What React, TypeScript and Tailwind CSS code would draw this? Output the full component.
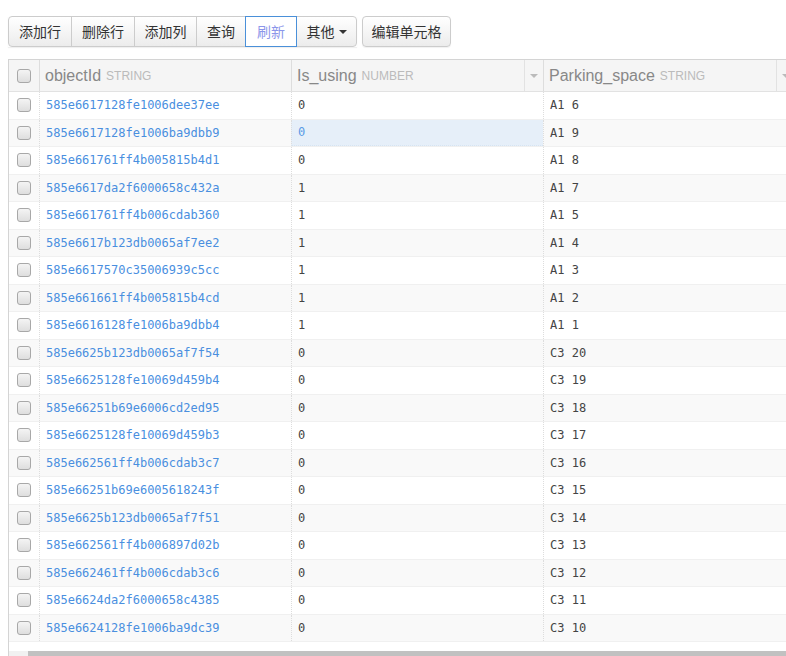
import React from 'react';

const rows: [string, string, string][] = [
  ['585e6617128fe1006dee37ee', '0', 'A1 6'],
  ['585e6617128fe1006ba9dbb9', '0', 'A1 9'],
  ['585e661761ff4b005815b4d1', '0', 'A1 8'],
  ['585e6617da2f6000658c432a', '1', 'A1 7'],
  ['585e661761ff4b006cdab360', '1', 'A1 5'],
  ['585e6617b123db0065af7ee2', '1', 'A1 4'],
  ['585e6617570c35006939c5cc', '1', 'A1 3'],
  ['585e661661ff4b005815b4cd', '1', 'A1 2'],
  ['585e6616128fe1006ba9dbb4', '1', 'A1 1'],
  ['585e6625b123db0065af7f54', '0', 'C3 20'],
  ['585e6625128fe10069d459b4', '0', 'C3 19'],
  ['585e66251b69e6006cd2ed95', '0', 'C3 18'],
  ['585e6625128fe10069d459b3', '0', 'C3 17'],
  ['585e662561ff4b006cdab3c7', '0', 'C3 16'],
  ['585e66251b69e6005618243f', '0', 'C3 15'],
  ['585e6625b123db0065af7f51', '0', 'C3 14'],
  ['585e662561ff4b006897d02b', '0', 'C3 13'],
  ['585e662461ff4b006cdab3c6', '0', 'C3 12'],
  ['585e6624da2f6000658c4385', '0', 'C3 11'],
  ['585e6624128fe1006ba9dc39', '0', 'C3 10'],
];

const cjk = "font-['Noto_Sans_CJK_SC','Liberation_Sans',sans-serif]";
const mono = "font-['DejaVu_Sans_Mono',monospace]";

function Checkbox() {
  return <div className="h-[14px] w-[14px] rounded-[3px] border border-[#a8a8a8] bg-linear-to-b from-[#f4f4f4] to-[#dedede]" />;
}

function Caret() {
  return <span className="ml-1 inline-block h-0 w-0 border-x-[4px] border-t-[4px] border-x-transparent border-t-[#333]" />;
}

function HeaderCell({ name, type, menu }: { name: string; type: string; menu?: boolean }) {
  return (
    <div className="flex h-full w-[252px] shrink-0 items-center border-l border-[#ddd] pl-[5px]">
      <span className="text-[16px] text-[#888]">{name}</span>
      <span className="ml-[5px] text-[12px] text-[#bbb]">{type}</span>
      {menu && (
        <div className="ml-auto flex h-full items-center">
          <div className="h-full border-l border-[#e2e2e2]" />
          <span className="mx-[5px] inline-block h-0 w-0 border-x-[4px] border-t-[4px] border-x-transparent border-t-[#bbb]" />
        </div>
      )}
    </div>
  );
}

export default function App() {
  const buttons = [
    { label: '添加行', w: 'w-[64px]', cls: 'rounded-l-[4px]' },
    { label: '删除行', w: 'w-[64px]', cls: '-ml-px' },
    { label: '添加列', w: 'w-[63px]', cls: '-ml-px' },
    { label: '查询', w: 'w-[50px]', cls: '-ml-px' },
  ];

  return (
    <div className="h-[656px] w-[786px] overflow-hidden bg-white font-['Liberation_Sans',sans-serif]">
      {/* toolbar */}
      <div className={`flex pl-2 pt-4 text-[14px] text-[#333] ${cjk}`}>
        <div className="flex h-[31px] shadow-[0_1px_1px_rgba(0,0,0,0.06)]">
          {buttons.map((b) => (
            <div
              key={b.label}
              className={`flex h-full items-center justify-center border border-[#ccc] bg-linear-to-b from-white to-[#ececec] ${b.w} ${b.cls}`}
            >
              {b.label}
            </div>
          ))}
          <div className="relative z-10 -ml-px flex h-full w-[52px] items-center justify-center border border-[#4a90d9] bg-white text-[#8c96ea]">
            刷新
          </div>
          <div className="-ml-px flex h-full w-[61px] items-center justify-center rounded-r-[4px] border border-[#ccc] bg-linear-to-b from-white to-[#ececec]">
            其他
            <Caret />
          </div>
        </div>
        <div className="ml-[5px] flex h-[31px] w-[89px] items-center justify-center rounded-[4px] border border-[#ccc] bg-linear-to-b from-white to-[#ececec] shadow-[0_1px_1px_rgba(0,0,0,0.06)]">
          编辑单元格
        </div>
      </div>

      {/* table */}
      <div className="ml-2 mt-3 w-[787px] border-l border-t border-[#d4d4d4]">
        <div className="flex h-[32px] border-b border-[#e2e2e2] bg-[#f5f5f5]">
          <div className="flex w-[30px] shrink-0 items-center justify-center">
            <Checkbox />
          </div>
          <HeaderCell name="objectId" type="STRING" />
          <HeaderCell name="Is_using" type="NUMBER" menu />
          <HeaderCell name="Parking_space" type="STRING" menu />
        </div>

        {rows.map(([id, using, space], i) => (
          <div
            key={id}
            className={`flex h-[27.5px] border-b border-[#f0f0f0] text-[12px] ${mono} ${i % 2 === 1 ? 'bg-[#f9f9f9]' : 'bg-white'}`}
          >
            <div className="flex w-[30px] shrink-0 items-center justify-center">
              <Checkbox />
            </div>
            <div className="flex w-[252px] shrink-0 items-center border-l border-dotted border-[#ddd] pl-[6px] text-[#4a8fdf]">
              {id}
            </div>
            <div
              className={`flex w-[252px] shrink-0 items-center border-l border-dotted border-[#ddd] pl-[6px] ${
                i === 1 ? 'border-b border-b-[#d6e4f2] bg-[#e6eff9] text-[#5a9be6]' : 'text-[#444]'
              }`}
            >
              {using}
            </div>
            <div className="flex w-[252px] shrink-0 items-center border-l border-dotted border-[#ddd] pl-[6px] text-[#444]">
              {space}
            </div>
          </div>
        ))}

        <div className="h-[9px] bg-white" />
        <div className="flex h-[6px] bg-[#f1f1f1]">
          <div className="w-[19px]" />
          <div className="flex-1 bg-[#c1c1c1]" />
        </div>
      </div>
    </div>
  );
}
